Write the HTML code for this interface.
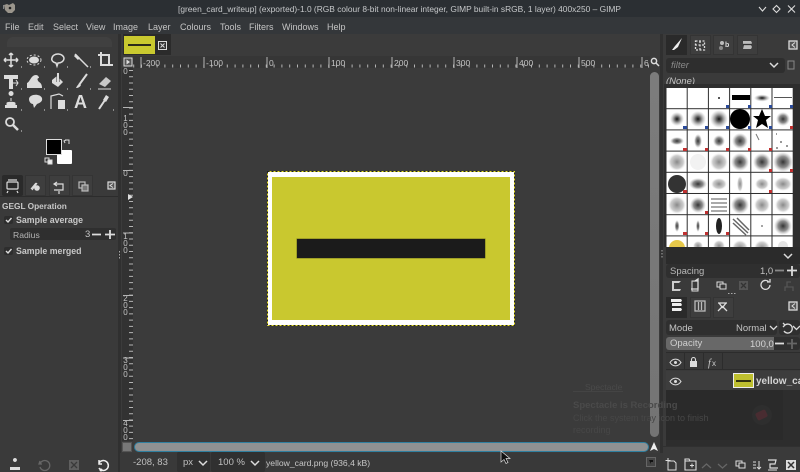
<!DOCTYPE html>
<html><head><meta charset="utf-8">
<style>
html,body{margin:0;padding:0;background:#3a3a3a}
#r{position:relative;width:800px;height:472px;overflow:hidden;background:#3a3a3a;font-family:"Liberation Sans",sans-serif;font-size:10px;color:#d0d0d0;filter:blur(.3px)}
.b{position:absolute}
.t{position:absolute;white-space:nowrap;line-height:12px}
.m{top:21px;color:#c4c4c4;font-size:9px}
.h{font-size:8.5px;color:#c4c4c4;top:58px;line-height:10px}
.v{position:absolute;left:122px;width:7px;font-size:8px;line-height:7px;color:#c4c4c4;text-align:center}
svg{position:absolute;left:0;top:0}
</style></head><body><div id="r">
<!-- bars -->
<div class="b" style="left:0;top:0;width:800px;height:17px;background:#2b2f33"></div>
<div class="b" style="left:0;top:17px;width:800px;height:17px;background:#34373a"></div>
<div class="b" style="left:120px;top:34px;width:543px;height:420px;background:#3b3b3b"></div>
<div class="b" style="left:118px;top:34px;width:3px;height:438px;background:#303030"></div>
<div class="b" style="left:660px;top:34px;width:3px;height:438px;background:#303030"></div>
<!-- faint toolbox watermark -->
<div class="b" style="left:7px;top:37px;width:105px;height:10px;background:#404040;border-radius:6px 6px 0 0"></div>
<!-- tab -->
<div class="b" style="left:123px;top:34px;width:48px;height:21px;background:#2b2b2b"></div>
<div class="b" style="left:124px;top:36px;width:31px;height:18px;background:#c9c92f"></div>
<div class="b" style="left:128px;top:44px;width:23px;height:2px;background:#2a2a1a"></div>
<!-- rulers -->
<div class="b" style="left:133px;top:56px;width:517px;height:12px;background:#363636"></div>
<div class="b" style="left:122px;top:68px;width:11px;height:373px;background:#323232"></div>
<!-- title text -->
<div class="t" style="left:178px;top:3px;font-size:8.4px;color:#c6c8ca">[green_card_writeup] (exported)-1.0 (RGB colour 8-bit non-linear integer, GIMP built-in sRGB, 1 layer) 400x250 – GIMP</div>
<div class="t m" style="left:5px">File</div><div class="t m" style="left:28px">Edit</div><div class="t m" style="left:53px">Select</div><div class="t m" style="left:86px">View</div><div class="t m" style="left:113px">Image</div><div class="t m" style="left:148px">Layer</div><div class="t m" style="left:180px">Colours</div><div class="t m" style="left:220px">Tools</div><div class="t m" style="left:249px">Filters</div><div class="t m" style="left:282px">Windows</div><div class="t m" style="left:327px">Help</div>
<!-- ruler labels -->
<div class="t h" style="left:143px">-200</div><div class="t h" style="left:206px">-100</div><div class="t h" style="left:269px">0</div><div class="t h" style="left:331px">100</div><div class="t h" style="left:394px">200</div><div class="t h" style="left:456px">300</div><div class="t h" style="left:519px">400</div><div class="t h" style="left:581px">500</div><div class="t h" style="left:644px">6</div>
<div class="v" style="top:68px;height:7px;overflow:hidden">0</div>
<div class="v" style="top:115px">1<br>0<br>0</div>
<div class="v" style="top:170px">0</div>
<div class="v" style="top:233px">1<br>0<br>0</div>
<div class="v" style="top:295px">2<br>0<br>0</div>
<div class="v" style="top:357px">3<br>0<br>0</div>
<div class="v" style="top:420px">4<br>0<br>0</div>
<!-- image -->
<div class="b" style="left:267px;top:171px;width:248px;height:155px;background:#fff"></div>
<div class="b" style="left:272px;top:177px;width:238px;height:143px;background:#c9c82f"></div>
<div class="b" style="left:297px;top:239px;width:188px;height:19px;background:#1b1b1b;box-shadow:0 0 0 .5px #77771f"></div>
<!-- scrollbars -->
<div class="b" style="left:650px;top:72px;width:9px;height:365px;background:linear-gradient(#7c7c7c,#747474);border-radius:5px"></div>
<div class="b" style="left:134px;top:442px;width:513px;height:8px;background:#8f9192;border:1px solid #2f7f9f;border-radius:5px"></div>
<div class="b" style="left:122px;top:442px;width:10px;height:10px;background:#777;border:1px solid #555;box-sizing:border-box"></div>
<!-- left docks -->
<div class="b" style="left:2px;top:175px;width:21px;height:21px;background:#2a2a2a;border-radius:2px"></div>
<div class="b" style="left:25px;top:175px;width:21px;height:21px;background:#3e3e3e;border:1px solid #343434;box-sizing:border-box"></div>
<div class="b" style="left:49px;top:175px;width:21px;height:21px;background:#3e3e3e;border:1px solid #343434;box-sizing:border-box"></div>
<div class="b" style="left:72px;top:175px;width:21px;height:21px;background:#3e3e3e;border:1px solid #343434;box-sizing:border-box"></div>
<div class="b" style="left:0;top:196px;width:118px;height:1px;background:#2c2c2c"></div>
<div class="t" style="left:2px;top:200px;font-size:8.3px;font-weight:bold;color:#c8c8c8">GEGL Operation</div>
<div class="t" style="left:16px;top:214px;font-size:8.8px;font-weight:bold;color:#c8c8c8">Sample average</div>
<div class="t" style="left:16px;top:245px;font-size:8.8px;font-weight:bold;color:#c8c8c8">Sample merged</div>
<div class="b" style="left:4px;top:216px;width:9px;height:8px;background:#2d2d2d;border-radius:2px"></div>
<div class="b" style="left:4px;top:247px;width:9px;height:8px;background:#2d2d2d;border-radius:2px"></div>
<div class="b" style="left:10px;top:228px;width:106px;height:12px;background:#2f2f2f;border-radius:2px"></div>
<div class="t" style="left:13px;top:229px;font-size:8.6px;color:#b4b4b4">Radius</div>
<div class="t" style="left:85px;top:229px;font-size:9.5px;color:#c4c4c4">3</div>
<!-- fg/bg -->
<div class="b" style="left:57px;top:150px;width:15px;height:14px;background:#fff;border-radius:1px"></div>
<div class="b" style="left:46px;top:139px;width:16px;height:16px;background:#000;border:1px solid #ddd;box-sizing:border-box"></div>
<!-- right docks -->
<div class="b" style="left:666px;top:35px;width:21px;height:20px;background:#2a2a2a"></div>
<div class="b" style="left:690px;top:35px;width:21px;height:20px;background:#3e3e3e;border:1px solid #343434;box-sizing:border-box"></div>
<div class="b" style="left:713px;top:35px;width:21px;height:20px;background:#3e3e3e;border:1px solid #343434;box-sizing:border-box"></div>
<div class="b" style="left:737px;top:35px;width:21px;height:20px;background:#3e3e3e;border:1px solid #343434;box-sizing:border-box"></div>
<div class="b" style="left:666px;top:58px;width:119px;height:15px;background:#2e2e2e;border-radius:3px"></div>
<div class="t" style="left:671px;top:60px;font-size:9.5px;font-style:italic;color:#8a8a8a">filter</div>
<div class="t" style="left:666px;top:76px;font-size:9.5px;font-style:italic;color:#c4c4c4">(None)</div>
<div class="b" style="left:664px;top:84px;width:136px;height:163px;background:#2e2e2e"></div>
<!-- brushes -->
<svg width="800" height="472" viewBox="0 0 800 472" style="clip-path:inset(87px 0 225px 0)">
<defs>
<radialGradient id="g"><stop offset="0" stop-color="#111"/><stop offset=".3" stop-color="#444" stop-opacity=".85"/><stop offset="1" stop-color="#999" stop-opacity="0"/></radialGradient>
<radialGradient id="s"><stop offset="0" stop-color="#333"/><stop offset=".55" stop-color="#666" stop-opacity=".75"/><stop offset="1" stop-color="#aaa" stop-opacity="0"/></radialGradient>
<radialGradient id="l"><stop offset="0" stop-color="#888"/><stop offset=".7" stop-color="#aaa" stop-opacity=".6"/><stop offset="1" stop-color="#ddd" stop-opacity="0"/></radialGradient>
<pattern id="c" x="666.5" y="88" width="21.2" height="21.2" patternUnits="userSpaceOnUse"><rect width="20.2" height="20.2" fill="#fff"/></pattern>
</defs>
<rect x="666.5" y="88" width="127" height="170" fill="url(#c)"/>
<!-- row1 -->
<circle cx="719" cy="98" r="1" fill="#222"/><rect x="732" y="95" width="18" height="5" fill="#000"/><ellipse cx="762" cy="98" rx="8" ry="3.5" fill="url(#g)"/><rect x="774" y="97" width="18" height="1" fill="#555"/>
<!-- row2 -->
<circle cx="677" cy="119" r="7" fill="url(#g)"/><circle cx="698" cy="119" r="8" fill="url(#g)"/><circle cx="719" cy="119" r="9" fill="url(#g)"/><circle cx="740" cy="119" r="10" fill="#000"/>
<path d="M762 109l3 7h6l-5 4 2 8-6-4-6 4 2-8-5-4h6z" fill="#000"/><circle cx="783" cy="119" r="7" fill="url(#s)"/>
<!-- row3 -->
<ellipse cx="677" cy="141" rx="7" ry="4" fill="url(#s)"/><ellipse cx="698" cy="141" rx="4" ry="7" fill="url(#s)"/><circle cx="719" cy="141" r="6" fill="url(#s)"/><circle cx="740" cy="141" r="8" fill="url(#s)"/><path d="M756 134l3 6" stroke="#777"/><path d="M776 134h1M780 142h2M786 146h2M776 148h2" stroke="#333"/>
<!-- row4 -->
<circle cx="677" cy="162" r="9" fill="url(#l)"/><circle cx="698" cy="162" r="8" fill="#f2f2f2"/><circle cx="719" cy="162" r="9" fill="url(#l)"/><circle cx="740" cy="162" r="9" fill="url(#s)"/><circle cx="762" cy="162" r="9" fill="url(#s)"/><circle cx="783" cy="162" r="10" fill="url(#s)"/>
<!-- row5 -->
<circle cx="677" cy="184" r="9" fill="#333"/><ellipse cx="698" cy="184" rx="9" ry="6" fill="url(#s)"/><ellipse cx="719" cy="184" rx="8" ry="6" fill="url(#l)"/><ellipse cx="740" cy="184" rx="3" ry="8" fill="url(#l)"/><ellipse cx="762" cy="184" rx="7" ry="6" fill="url(#l)"/><ellipse cx="783" cy="184" rx="9" ry="7" fill="url(#l)"/>
<!-- row6 -->
<circle cx="677" cy="205" r="9" fill="url(#l)"/><circle cx="698" cy="205" r="8" fill="url(#s)"/><path d="M711 199h16M711 203h16M711 207h16M711 211h16" stroke="#555"/><circle cx="740" cy="205" r="9" fill="url(#s)"/><circle cx="762" cy="205" r="8" fill="url(#l)"/><circle cx="783" cy="205" r="8" fill="url(#l)"/>
<!-- row7 -->
<ellipse cx="677" cy="226" rx="2.5" ry="6" fill="url(#s)"/><ellipse cx="698" cy="226" rx="2" ry="6" fill="url(#s)"/><ellipse cx="719" cy="226" rx="3" ry="8" fill="#222"/><path d="M733 219l15 14M733 223l13 12M737 218l12 12" stroke="#666" stroke-width="1.5"/><circle cx="762" cy="226" r="1" fill="#888"/><circle cx="783" cy="226" r="9" fill="url(#s)"/>
<!-- row8 -->
<circle cx="677" cy="248" r="8" fill="#e6c84a"/><circle cx="698" cy="246" r="5" fill="url(#l)"/><circle cx="719" cy="246" r="6" fill="url(#l)"/><circle cx="740" cy="248" r="8" fill="url(#l)"/><circle cx="762" cy="248" r="8" fill="url(#l)"/><circle cx="783" cy="246" r="5" fill="#e4e4e4"/>
<!-- badges -->
<g fill="#2a4a9a"><rect x="726" y="105" width="3" height="3"/><rect x="748" y="105" width="3" height="3"/><rect x="769" y="105" width="3" height="3"/><rect x="790" y="105" width="3" height="3"/><rect x="683" y="126" width="4" height="3"/><rect x="705" y="126" width="3" height="3"/><rect x="726" y="126" width="3" height="3"/><rect x="748" y="126" width="3" height="3"/><rect x="769" y="126" width="3" height="3"/></g>
<g fill="#c03030"><rect x="790" y="126" width="3" height="3"/><rect x="683" y="148" width="4" height="3"/><rect x="705" y="148" width="3" height="3"/><rect x="726" y="148" width="3" height="3"/><rect x="748" y="148" width="3" height="3"/><rect x="769" y="148" width="3" height="3"/><rect x="790" y="169" width="3" height="3"/><rect x="769" y="169" width="3" height="3"/><rect x="683" y="190" width="4" height="3"/><rect x="769" y="190" width="3" height="3"/><rect x="705" y="211" width="3" height="3"/><rect x="683" y="232" width="4" height="3"/><rect x="705" y="232" width="3" height="3"/><rect x="726" y="232" width="3" height="3"/></g>
</svg>
<div class="b" style="left:666px;top:247px;width:134px;height:17px;background:#2b2b2b"></div>
<div class="b" style="left:666px;top:264px;width:134px;height:14px;background:#2f2f2f;border-radius:3px"></div>
<div class="t" style="left:670px;top:266px;font-size:9.5px;color:#b8b8b8">Spacing</div>
<div class="t" style="left:760px;top:266px;font-size:9.5px;color:#c0c0c0">1,0</div>
<!-- layers docks -->
<div class="b" style="left:666px;top:297px;width:21px;height:21px;background:#2a2a2a"></div>
<div class="b" style="left:690px;top:297px;width:21px;height:21px;background:#3e3e3e;border:1px solid #343434;box-sizing:border-box"></div>
<div class="b" style="left:713px;top:297px;width:21px;height:21px;background:#3e3e3e;border:1px solid #343434;box-sizing:border-box"></div>
<div class="b" style="left:666px;top:320px;width:111px;height:15px;background:#2f2f2f;border-radius:3px"></div>
<div class="b" style="left:779px;top:320px;width:21px;height:15px;background:#2f2f2f;border-radius:3px"></div>
<div class="t" style="left:669px;top:323px;font-size:9.5px;color:#c4c4c4">Mode</div>
<div class="t" style="left:736px;top:323px;font-size:9.5px;color:#c4c4c4">Normal</div>
<div class="b" style="left:666px;top:337px;width:134px;height:13px;background:#2f2f2f;border-radius:3px"></div>
<div class="b" style="left:666px;top:337px;width:108px;height:13px;background:#686868;border-radius:3px 0 0 3px"></div>
<div class="t" style="left:670px;top:338px;font-size:9.5px;color:#cfcfcf">Opacity</div>
<div class="t" style="left:750px;top:339px;font-size:9.5px;color:#d4d4d4">100,0</div>
<div class="b" style="left:666px;top:352px;width:134px;height:18px;background:#383838;border-top:1px solid #2c2c2c;border-bottom:1px solid #2c2c2c;box-sizing:border-box"></div>
<div class="b" style="left:684px;top:353px;width:1px;height:17px;background:#2c2c2c"></div>
<div class="b" style="left:703px;top:353px;width:1px;height:17px;background:#2c2c2c"></div>
<div class="b" style="left:722px;top:353px;width:1px;height:17px;background:#2c2c2c"></div>
<div class="b" style="left:666px;top:371px;width:134px;height:19px;background:#3d3d3d"></div>
<div class="b" style="left:666px;top:390px;width:134px;height:56px;background:#2d2d2d"></div>
<div class="b" style="left:666px;top:390px;width:117px;height:50px;background:#2a2a2a"></div>
<div class="b" style="left:752px;top:405px;width:20px;height:20px;background:#2e2e2e;border-radius:50%"></div>
<div class="b" style="left:756px;top:411px;width:11px;height:8px;background:#6b2b35;opacity:.45;transform:rotate(-25deg);border-radius:2px"></div>
<div class="b" style="left:733px;top:373px;width:21px;height:15px;background:#bfc02f;border:1.5px solid #eee;box-sizing:border-box"></div>
<div class="b" style="left:736px;top:380px;width:15px;height:2px;background:#33330f"></div>
<div class="t" style="left:756px;top:376px;font-size:10px;font-weight:bold;color:#d4d4d4;width:44px;overflow:hidden">yellow_car</div>
<div class="b" style="left:663px;top:446px;width:137px;height:1px;background:#303030"></div>
<!-- notification -->
<div class="t" style="left:585px;top:381px;font-size:8.5px;color:#4a4a4a">Spectacle</div>
<div class="b" style="left:573px;top:391px;width:50px;height:1px;background:#444"></div>
<div class="t" style="left:573px;top:400px;font-size:9.5px;font-weight:bold;color:#4a4a4a">Spectacle is Recording</div>
<div class="t" style="left:573px;top:412px;font-size:9px;color:#474747">Click the system tray icon to finish</div>
<div class="t" style="left:573px;top:424px;font-size:9px;color:#474747">recording</div>
<!-- status -->
<div class="b" style="left:120px;top:453px;width:543px;height:19px;background:#393939"></div>
<div class="t" style="left:133px;top:457px;font-size:9.5px;color:#c0c0c0">-208, 83</div>
<div class="b" style="left:177px;top:452px;width:33px;height:20px;background:#303030;border-radius:2px"></div>
<div class="t" style="left:183px;top:457px;font-size:9.5px;color:#c0c0c0">px</div>
<div class="b" style="left:211px;top:452px;width:54px;height:20px;background:#303030;border-radius:2px"></div>
<div class="t" style="left:218px;top:457px;font-size:9.5px;color:#c0c0c0">100 %</div>
<div class="t" style="left:266px;top:457px;font-size:8.6px;color:#c8c8c8">yellow_card.png (936,4 kB)</div>
<!-- vector icons and ruler ticks -->
<svg width="800" height="472" viewBox="0 0 800 472" fill="none" stroke="#dcdcdc">
<!-- gimp logo -->
<path d="M4 5l3-1 2 1 4-2 2 2v5l-3 3H8L5 10z" fill="#9a958c" stroke="none"/><circle cx="10" cy="8" r="1.3" fill="#222" stroke="none"/><path d="M3 6h1M3 8h1" stroke="#ddd"/>
<!-- window buttons -->
<path d="M759 7l3.500 4 3.500-4" stroke-width="1.100"/><path d="M776.500 5.500l3.500 3.500-3.500 3.500-3.500-3.500z" stroke-width="1.100"/><path d="M788 5.500l7 7M795 5.500l-7 7" stroke-width="1.100"/>
<!-- tab close -->
<rect x="158.500" y="41.500" width="8" height="8" fill="#333"/><path d="M160.500 43.500l4 4M164.500 43.500l-4 4"/>
<!-- ruler corner -->
<rect x="124" y="58" width="8" height="8" fill="#555"/><path d="M126.500 59.500v5l3.500-2.500z" fill="#ddd" stroke="none"/>
<circle cx="654" cy="61" r="2.600" stroke-width="1.500"/><path d="M656 63l3 3" stroke-width="1.500"/>
<!-- ruler ticks -->
<g stroke="#b4b4b4">
<path d="M141 57v11M204 57v11M267 57v11M329 57v11M392 57v11M454 57v11M517 57v11M579 57v11M642 57v11"/>
<path d="M133 66h516" stroke-width="3" stroke-dasharray="1 6.800" stroke-dashoffset="-0.200"/>
<path d="M123 107.500h10M123 170.500h10M123 233h10M123 295.500h10M123 358h10M123 420.500h10"/>
<path d="M131 68v373" stroke-width="4" stroke-dasharray="1 5.240" stroke-dashoffset="-2"/>
</g>
<path d="M128 194l5 3-5 3z" fill="#ddd" stroke="none"/>
<!-- selection dashes -->
<rect x="267.500" y="171.500" width="247" height="154" stroke="#222" stroke-dasharray="2 2"/>
<rect x="267.500" y="171.500" width="247" height="154" stroke="#e8e020" stroke-dasharray="2 2" stroke-dashoffset="2"/>
<!-- toolbox row1 -->
<g stroke-width="1.500">
<path d="M11 53v14M4 60h14M11 53l-2 2M11 53l2 2M11 67l-2-2M11 67l2-2M4 60l2-2M4 60l2 2M18 60l-2-2M18 60l-2 2"/>
<ellipse cx="34" cy="60" rx="5" ry="3.500" fill="#dcdcdc" stroke="none"/><ellipse cx="34" cy="60" rx="7" ry="5" stroke-width="1" stroke-dasharray="2 2"/>
<path d="M52 58a6 4.500 0 1 1 6 5l-1 3-1-3a6 4 0 0 1-4-5z"/>
<path d="M75 54l13 13"/><path d="M75 55l4 4" stroke-width="3"/>
<path d="M98 55h11v11M101 52v13h12" stroke-width="2"/>
<!-- row2 -->
<path d="M4 75h14v4h-5v10h-4v-10H4z" fill="#dcdcdc" stroke="none"/><path d="M13 83h5M16 80l2 3-2 3" stroke-width="1"/>
<path d="M27 88v-5c3-1 4-8 9-8 2 0 3 2 3 3-2 0-2 2 0 4 2 1 3 3 3 6z" fill="#dcdcdc" stroke="none"/>
<path d="M52 80l5-4 6 6-5 5-6-4z" fill="#dcdcdc" stroke="none"/><path d="M58 74v8" stroke="#3a3a3a" stroke-width="3"/><path d="M58 73v9" stroke-width="2"/>
<path d="M87 74L79 85" stroke-width="2"/><path d="M80 84c-2 0-3 2-4 4 2 0 4-1 5-3z" fill="#dcdcdc" stroke="none"/>
<path d="M99 84l7-7 5 4-6 6z" fill="#c8c8c8" stroke="none"/><path d="M98 89h13" stroke-width="1"/>
<!-- row3 -->
<path d="M11 96a2.500 2.500 0 1 1 .1 0zM11 99v3M5 108v-3h12v3z" fill="#dcdcdc" stroke="none"/><path d="M11 98v3M7 103c0-1 8-1 8 0v2H7z" fill="#dcdcdc" stroke="#dcdcdc" stroke-width="1"/>
<path d="M29 99c0-5 11-6 13-1 1 4-3 5-5 6l-3 4-1-4c-2 0-4-2-4-5z" fill="#dcdcdc" stroke="none"/>
<path d="M51 109V96l8-2 4 2" stroke-width="1.200"/><rect x="58" y="100" width="7" height="9" fill="#dcdcdc" stroke="none"/>
<!-- row4 -->
<circle cx="10" cy="122" r="4" stroke-width="1.800"/><path d="M13 125l5 5" stroke-width="2.500"/>
<!-- eyedropper -->
<path d="M99 109l6-9" stroke-width="2"/><path d="M103 100l3-5 3 2-3 5z" fill="#dcdcdc" stroke="none"/>
</g>
<text x="74" y="108" font-family="Liberation Sans" font-weight="bold" font-size="18" fill="#dcdcdc" stroke="none">A</text>
<!-- tiny corner marks -->
<path d="M21 67h1M44 67h1M67 67h1M90 67h1M21 89h1M44 89h1M67 89h1M90 89h1M21 110h1M44 110h1M67 110h1M113 110h1M21 131h1" stroke="#ddd"/>
<!-- fg/bg tiny -->
<path d="M65 140h4v4M65 143l-1-2 2-1" stroke-width="1"/><rect x="45" y="158" width="4" height="4"/><rect x="48" y="160" width="4" height="4" fill="#eee"/>
<!-- tab icons left -->
<g stroke-width="1.200"><rect x="7" y="182" width="11" height="7" rx="1"/><path d="M8 191l-1 2M17 191l1 2M8 180h9"/>
<path d="M31 189l5-6M32 190l5-7"/><circle cx="37" cy="188" r="2.800" fill="#ddd" stroke="none"/>
<path d="M55 184h8v6h-9M57 182l-3 2 3 2M59 191v3"/><rect x="79" y="182" width="6" height="6" stroke="#bbb"/><rect x="82" y="185" width="6" height="6" fill="#777" stroke="#bbb"/>
<rect x="108" y="182" width="7" height="7" fill="#555"/><path d="M113 183.500l-3 2 3 2" stroke-width="1"/></g>
<!-- check marks -->
<path d="M6 220l2 2 3.500-4M6 251l2 2 3.500-4" stroke-width="1.400"/>
<!-- spinner -->
<path d="M92 234.500h9M105 234.500h10M110 230v9" stroke-width="1.800"/>
<!-- sash dots -->
<path d="M119.500 251v8" stroke-dasharray="1.500 1.500" stroke="#aaa"/><path d="M662 250v8" stroke-dasharray="1.500 1.500" stroke="#aaa"/>
<path d="M728 293.500h9" stroke-dasharray="1.500 1.500" stroke="#aaa"/>
<!-- arrow -->
<path d="M654 442l4 9-4-2-4 2z" fill="#eee" stroke="none"/>
<!-- nav -->
<rect x="646.500" y="457.500" width="9" height="9" fill="#444" stroke="#666"/><path d="M649 460h4v2h-2v2z" fill="#111" stroke="none"/>
<!-- right tabs -->
<g stroke-width="1.300">
<path d="M672 50l3-4 7-8-4 9-4 3z" fill="#eee" stroke="none"/>
<rect x="695.500" y="41" width="9" height="9" stroke-dasharray="2 1.500"/><path d="M695 45h10M700 41v9" stroke-dasharray="2 1.500"/>
<circle cx="722" cy="43" r="2" fill="#bbb" stroke="none"/><circle cx="721" cy="48" r="2" fill="#888" stroke="none"/><text x="725" y="47" font-family="Liberation Sans" font-weight="bold" font-size="7" fill="#ddd" stroke="none">b</text>
<path d="M743 41h8l1 2-1 2h-8M744 45h7l1 2-1 2h-8" fill="#bbb" stroke="none"/><path d="M743 44.500h9" stroke="#333"/>
<rect x="789" y="41" width="8" height="8" fill="#555"/><path d="M795 42.500l-3 2.500 3 2.500" stroke-width="1"/>
<path d="M770 63l4 4 4-4" stroke-width="1.500"/>
<path d="M788 61h6v8h-6z" stroke="#888" stroke-width="1"/>
<path d="M784 254l4 4 4-4" stroke-width="1.500"/>
<path d="M775 270.500h9" stroke="#888" stroke-width="1.800"/><path d="M787 270.500h10M792 266v10" stroke-width="1.800"/>
<!-- action row -->
<path d="M672 281h9l-2 2-5 0v6h7l-1 2h-8z" fill="#ccc" stroke="none"/><path d="M698 281h-3l3-2v10h-7"/><path d="M692 281h6v10h-6z" stroke-width="1"/>
<rect x="717" y="282" width="6" height="5" stroke-width="1"/><rect x="720" y="284" width="6" height="5" stroke-width="1" fill="#3a3a3a"/>
<rect x="739" y="281" width="9" height="9" fill="#555" stroke="none"/><path d="M741 283l5 5M746 283l-5 5" stroke="#333"/>
<path d="M770 285a4.500 4.500 0 1 1-1.500-3.500M770 279v3h-3"/>
<path d="M785 291v-4h8v4M787 287v-5h4" stroke="#555"/>
<!-- layers tabs -->
<path d="M672 303h9l1 2-1 1h-9zM672 308h9l1 1.500-1 1.500h-9zM671 299h10l1 1.500-1 1.500h-10z" fill="#eee" stroke="none"/>
<rect x="695" y="301" width="10" height="10" stroke="#bbb"/><path d="M698.500 302v8M701.500 302v8" stroke="#bbb"/>
<path d="M718 303h9M719 303l3 4-4 4M726 303l-3 4 4 4" stroke="#ddd"/><circle cx="722.500" cy="307" r="1.200" fill="#ddd" stroke="none"/>
<rect x="789" y="302" width="8" height="8" fill="#555"/><path d="M795 303.500l-3 2.500 3 2.500" stroke-width="1"/>
<!-- mode -->
<path d="M770 326l3.500 3.500 3.500-3.500"/><path d="M785 325a4.500 4.500 0 1 1-1 6M783 323l2 2-2 2"/><path d="M793 326l3.500 3.500 3.500-3.500"/>
<path d="M775 343.500h9" stroke-width="1.800"/><path d="M787 343.500h10M792 339v10" stroke="#666" stroke-width="1.800"/>
<!-- layer header -->
<path d="M670 362.500c3-4.500 8-4.500 11 0-3 4.500-8 4.500-11 0z" stroke-width="1.100"/><circle cx="675.500" cy="362.500" r="1.500" fill="#ddd" stroke="none"/>
<rect x="690" y="361" width="7" height="6" fill="#ddd" stroke="none"/><path d="M691.500 361v-1.500a2 2 0 0 1 4 0V361" stroke-width="1.100"/>
<text x="708" y="366" font-family="Liberation Serif" font-style="italic" font-size="10" fill="#ccc" stroke="none">f</text><text x="712" y="366" font-family="Liberation Sans" font-size="8" fill="#ccc" stroke="none">x</text>
<path d="M670 381.500c3-4.500 8-4.500 11 0-3 4.500-8 4.500-11 0z" stroke-width="1.100"/><circle cx="675.500" cy="381.500" r="1.500" fill="#ddd" stroke="none"/>
<!-- bottom right -->
<path d="M668 461h6l2 2v7h-8z" stroke-width="1"/><path d="M668 458v5M665.500 460.500h5" stroke-width="1"/>
<path d="M685 461h11v9h-11zM685 461v-2h4l1 2" stroke-width="1.100"/><path d="M690 465.500h4M692 463.500v4" stroke-width="1"/>
<path d="M702 468l4.500-4 4.500 4M718 464l4.500 4 4.500-4" stroke="#666"/>
<rect x="736" y="461" width="6" height="5" stroke-width="1"/><rect x="739" y="463" width="6" height="5" stroke-width="1" fill="#3a3a3a"/>
<path d="M753 462h3M753 465h3M753 468h3M759 461v8M757 467l2 2 2-2" stroke-width="1"/>
<path d="M768 460h8l-1 4h-5v4h8" stroke-width="1.200"/><path d="M768 470h9" stroke-width="1"/>
<rect x="786" y="460" width="10" height="10" fill="#ddd" stroke="none"/><path d="M788 462l6 6M794 462l-6 6" stroke="#333" stroke-width="1.500"/>
<!-- bottom left -->
<path d="M15 458a2 2 0 1 1-.1 0zM15 462v3M10 470v-3h10v3z" fill="#ddd" stroke="none"/>
<path d="M40 461l-1 3 3 0M40 464a5 5 0 1 1 0 3" stroke="#666"/>
<rect x="69" y="460" width="10" height="10" fill="#5f5f5f" stroke="none"/><path d="M71 462l6 6M77 462l-6 6" stroke="#3a3a3a"/>
<path d="M99 463a5 5 0 1 1 0 5M99 460v4h3" stroke="#eee" stroke-width="1.500"/><circle cx="101" cy="470" r="1.500" fill="#eee" stroke="none"/>
<!-- combos -->
<path d="M199 461l4 4 4-4M251 461l4 4 4-4" stroke-width="1.500"/>
</g>
<!-- cursor -->
<path d="M501 451v11l3-2.500 2 4 2-1-2-4h4z" fill="#111" stroke="#ddd" stroke-width=".7"/>
</svg>
</div></body></html>
